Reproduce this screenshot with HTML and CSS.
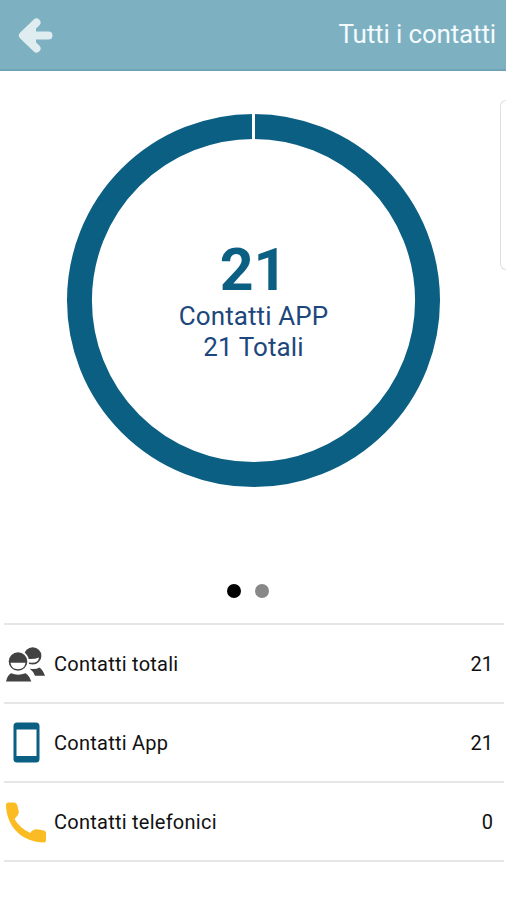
FILE: index.html
```html
<!DOCTYPE html>
<html lang="it">

<head>
  <title>Tutti i contatti</title>
  <meta charset="UTF-8">
  <meta name="viewport" content="width=device-width, initial-scale=1.0">
  <link rel="stylesheet" href="styles.css">
</head>

<body>

<header class="topbar">
  <svg class="back" viewBox="0 0 36 38">
    <path d="M18.5 5.5 L5 18.5 L18.5 31.5 M8 18.5 H30.5" />
    <path class="fill" d="M3 18.5 L18 5 V32 Z" />
  </svg>
  <span class="title">Tutti i contatti</span>
</header>

<section class="slider">
  <div class="chart">
    <svg class="ring" viewBox="0 0 374 374">
      <circle cx="187" cy="187" r="174.5" />
      <path d="M187 0 V27" />
    </svg>
    <div class="chart-text">
      <div class="number">21</div>
      <div class="label">Contatti APP</div>
      <div class="label">21 Totali</div>
    </div>
  </div>
  <div class="next-card"></div>
</section>

<div class="dots">
  <span class="dot active"></span>
  <span class="dot"></span>
</div>

<ul class="list">
  <li class="row">
    <svg class="icon" viewBox="0 0 42 42">
      <circle cx="28.7" cy="12.9" r="8.7" fill="#424242" />
      <path fill="#fff" d="M20 15.5 Q29 17 35 14.5 Q34.500 19.800 28 19.800 Q23 20 20 15.500 Z" />
      <path fill="#424242" d="M25.500 25.500 Q31 27 35.500 24.500 Q38.500 26.500 41 32.700 H31 Q29 28 25.500 25.500 Z" />
      <circle cx="14" cy="18.500" r="11" fill="#fff" />
      <circle cx="14" cy="18.500" r="9.300" fill="#424242" />
      <path fill="#fff" d="M6.500 19.800 H21.500 Q20.500 26.200 14 26.200 Q7.500 26.200 6.500 19.800 Z" />
      <path fill="#424242" d="M7 30.300 Q14 33 21.500 30.300 Q25 32 27.300 38.400 H2 Q3.500 32 7 30.300 Z" />
    </svg>
    <span class="name">Contatti totali</span>
    <span class="count">21</span>
  </li>
  <li class="row">
    <svg class="icon" viewBox="0 0 42 42">
      <path fill="#0b5f82" fill-rule="evenodd" d="M13 0.500 H32 Q35.500 0.500 35.500 4 V37 Q35.500 40.500 32 40.500 H13 Q9.500 40.500 9.500 37 V4 Q9.500 0.500 13 0.500 Z M12.500 7.500 V34 H32.500 V7.500 Z" />
    </svg>
    <span class="name">Contatti App</span>
    <span class="count">21</span>
  </li>
  <li class="row">
    <svg class="icon" viewBox="0 0 42 42">
      <path fill="#fbbc23" d="M2 4 Q2 1.500 4.500 1.500 H10 Q12.500 1.500 13.200 4 L14.800 10.500 Q15 13.500 10.500 18 Q16 27.500 26.300 32 Q28.500 28.200 33 28.300 L40 29.500 Q42 30 42 32 V39.500 Q42 41.500 40 41.500 C18 41 2.500 26 2 4 Z" />
    </svg>
    <span class="name">Contatti telefonici</span>
    <span class="count">0</span>
  </li>
</ul>

</body>

</html>
```
FILE: styles.css
```css
body {
  margin: 0;
  background: #fff;
  font-family: Roboto, sans-serif;
  overflow: hidden;
}

.topbar {
  display: flex;
  justify-content: space-between;
  align-items: center;
  box-sizing: border-box;
  height: 71px;
  padding: 0 10px 2px 18px;
  background: #7db0c1;
  border-bottom: 2px solid #6fa5b7;
}

.back {
  width: 36px;
  height: 38px;
  margin-top: 5px;
  fill: none;
  stroke: #dfecf0;
  stroke-width: 8;
  stroke-linecap: round;
  stroke-linejoin: round;
}

.back .fill {
  fill: #dfecf0;
  stroke: none;
}

.title {
  color: #f4fbfe;
  font-size: 26px;
  letter-spacing: -0.15px;
}

.slider {
  display: flex;
  justify-content: space-between;
  height: 513px;
  padding-left: 67px;
}

.chart {
  display: grid;
  width: 373px;
  height: 374px;
  margin-top: 43px;
}

.ring, .chart-text {
  grid-area: 1 / 1;
}

.ring circle {
  fill: none;
  stroke: #0b5f82;
  stroke-width: 25;
}

.ring path {
  stroke: #fff;
  stroke-width: 3;
}

.chart-text {
  padding-top: 126px;
  text-align: center;
}

.number {
  margin-bottom: 1px;
  color: #0b5f82;
  font-size: 59px;
  font-weight: bold;
  line-height: 60px;
}

.label {
  color: #1d477c;
  font-size: 26px;
  line-height: 31px;
  letter-spacing: 0.1px;
}

.next-card {
  flex: none;
  width: 5px;
  height: 168px;
  margin-top: 29px;
  border: 1px solid #dedede;
  border-right: none;
  border-radius: 6px 0 0 6px;
}

.dots {
  display: flex;
  justify-content: center;
  gap: 14px;
  height: 39px;
  padding-right: 10px;
}

.dot {
  width: 14px;
  height: 14px;
  border-radius: 50%;
  background: #888;
}

.dot.active {
  background: #000;
}

.list {
  margin: 0 2px 0 4px;
  padding: 0;
  list-style: none;
  border-top: 2px solid #e6e6e6;
}

.row {
  display: flex;
  align-items: center;
  height: 77px;
  padding-right: 11px;
  border-bottom: 2px solid #e6e6e6;
  color: #111;
  font-size: 20px;
}

.icon {
  width: 42px;
  height: 42px;
  margin-right: 8px;
}

.name {
  flex: 1;
  letter-spacing: 0.25px;
}
```
